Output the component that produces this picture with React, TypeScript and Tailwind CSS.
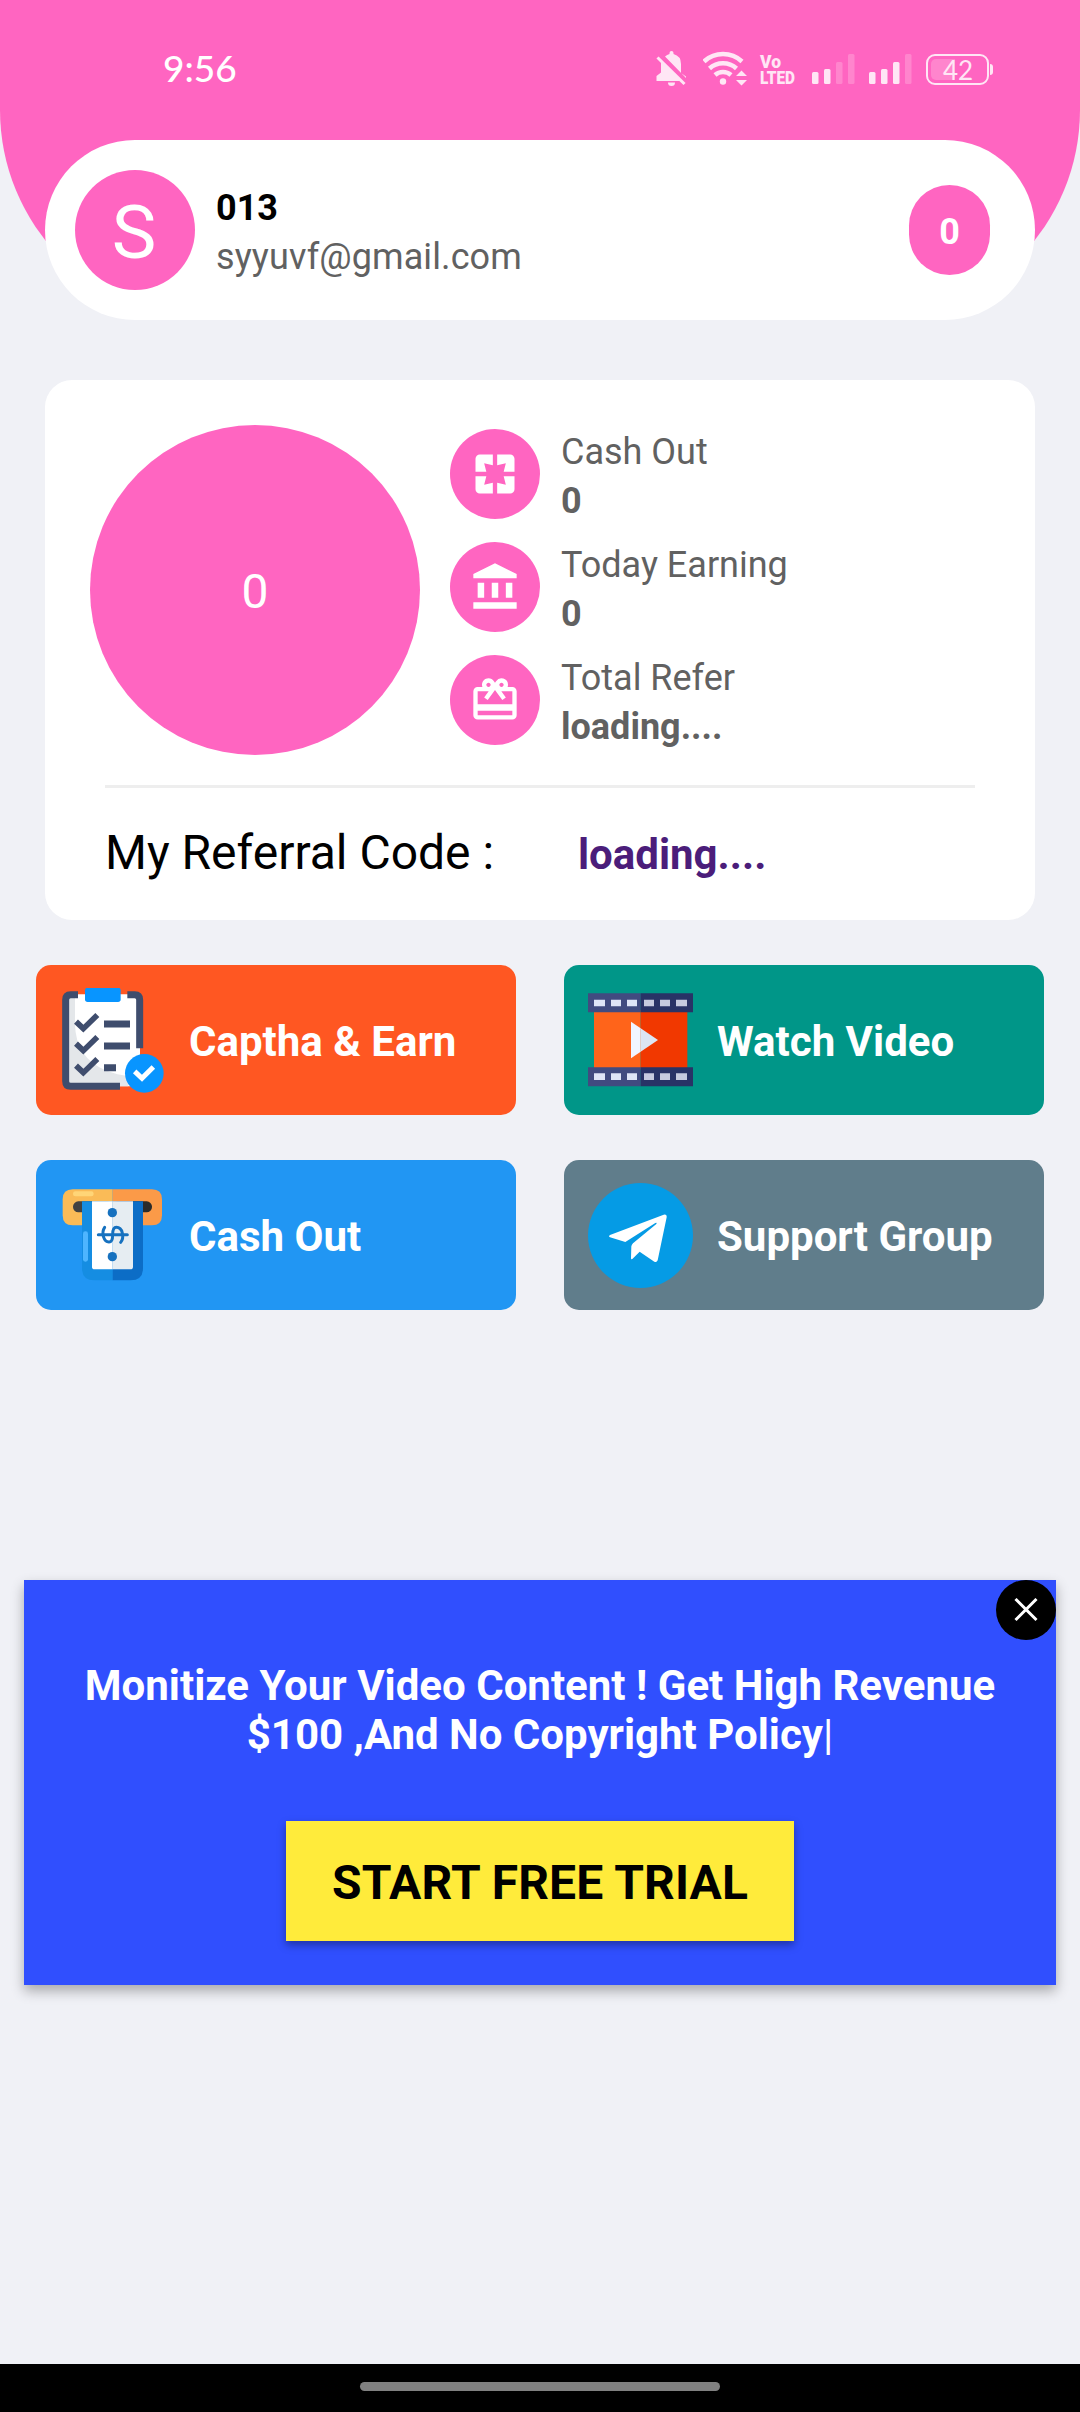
import type { ReactNode } from 'react';
import { MdAccountBalance, MdCardGiftcard, MdPages } from 'react-icons/md';

const stats = [
  { label: 'Cash Out', value: '0', icon: MdPages },
  { label: 'Today Earning', value: '0', icon: MdAccountBalance },
  { label: 'Total Refer', value: 'loading....', icon: MdCardGiftcard }
];

function StatusBar() {
  return (
    <div className="flex h-[140px] items-start justify-between pl-[163px] pr-[87px]">
      <span className="mt-[46px] font-[Lato,sans-serif] text-[37px] font-medium leading-[44px] text-white">9:56</span>
      <div className="mt-[46px] flex h-[48px] text-[#ffe6f5]">
        {/* Muted bell */}
        <svg className="mr-[15px] h-[48px] w-[32px]" viewBox="0 0 32 48" fill="currentColor">
          <path d="M9 10.500Q11 8.500 13.500 8V7a2 2 0 0 1 4 0v1q7.500 2 7.500 10v9l5 3.500v1.500z" />
          <path d="M5 14v12.500L.500 30v5h25z" />
          <path d="M12 36.500h7a3.500 3.500 0 0 1-7 0z" />
          <path d="M1.500 11.500L28.500 38" stroke="currentColor" strokeWidth="3" />
        </svg>
        {/* Wifi with traffic arrows */}
        <svg className="mr-[12px] h-[48px] w-[45px]" viewBox="0 0 45 48" fill="none" stroke="currentColor" strokeWidth="4.500">
          <path d="M1 15.500a28 28 0 0 1 38 0M6.500 22.500a20 20 0 0 1 27 0M12 29a12 12 0 0 1 16 0" />
          <circle cx="20" cy="35.500" r="3.200" fill="currentColor" stroke="none" />
          <path d="M33 30l5.500-5.500L44 30zM33 34l5.500 5.500L44 34z" fill="currentColor" stroke="none" />
        </svg>
        <svg className="mr-[14px] h-[48px] w-[38px] overflow-visible" viewBox="0 0 38 48" fill="currentColor">
          <text x="0" y="21.500" textLength="21" lengthAdjust="spacingAndGlyphs" className="font-[Roboto,sans-serif] text-[19px] font-black">Vo</text>
          <text x="0" y="37.500" textLength="35" lengthAdjust="spacingAndGlyphs" className="font-[Roboto,sans-serif] text-[19px] font-black">LTED</text>
        </svg>
        <SignalBars active={2} />
        <SignalBars active={3} />
        <div className="mt-[8px] flex h-[31px] items-center">
          <div className="flex h-[31px] w-[63px] items-center rounded-[9px] border-2 border-[#ffe6f5] p-[3px]">
            <div className="flex h-[21px] w-[24px] items-center rounded-l-[5px] bg-[#ff85cd] pl-[12px] font-[Lato,sans-serif] text-[26px] leading-none">42</div>
          </div>
          <div className="ml-px h-[11px] w-[3px] rounded-r bg-[#ffe6f5]" />
        </div>
      </div>
    </div>
  );
}

function SignalBars({ active }: { active: number }) {
  const bars = [
    { x: 0, h: 12 },
    { x: 12, h: 15 },
    { x: 24, h: 22 },
    { x: 36, h: 30 }
  ];

  return (
    <svg className="mr-[14px] h-[48px] w-[43px]" viewBox="0 0 43 48">
      {bars.map((bar, i) => (
        <rect key={bar.x} x={bar.x} y={38 - bar.h} width="6.500" height={bar.h} rx="1.500" fill={i < active ? '#ffe6f5' : '#ff85cd'} />
      ))}
    </svg>
  );
}

function ChecklistIcon() {
  return (
    <svg className="size-[105px]" viewBox="90 83 315 315">
      <path d="M106 102h224v276H106z" fill="#fff" />
      <path d="M116 112h19v80q2 100 90 137 40 16 70 18v31H116z" fill="#e4e7ea" />
      <path d="M144 103h-22q-15 0-15 15v245q0 15 15 15h148M292 103h22q15 0 15 15v146" fill="none" stroke="#3f4d6d" strokeWidth="21" />
      <rect x="165" y="82" width="107" height="43" rx="8" fill="#0895ff" />
      <path d="M138 184l22 21 42-41M138 250l22 21 42-41M138 316l22 21 42-41" fill="none" stroke="#3f4d6d" strokeWidth="17" />
      <path d="M222 191h78M222 257h78M222 322h36" stroke="#3f4d6d" strokeWidth="21" />
      <circle cx="343" cy="339" r="58" fill="#0895ff" />
      <path d="M314 333l22 21 34-34" fill="none" stroke="#fff" strokeWidth="15" />
    </svg>
  );
}

function FilmIcon() {
  return (
    <svg className="size-[105px]" viewBox="84 83 315 315">
      <path d="M102 150h140v175H102z" fill="#ff641a" />
      <path d="M242 150h140v175H242z" fill="#f13800" />
      <path d="M84 99h158v57H84zM84 321h158v57H84z" fill="#414b80" />
      <path d="M242 99h157v57H242zM242 321h157v57H242z" fill="#283366" />
      <path d="M102 118h33v20h-33zM153 118h30v20h-30zM201 118h30v20h-30zM102 339h33v20h-33zM153 339h30v20h-30zM201 339h30v20h-30z" fill="#dfe5f7" />
      <path d="M252 118h30v20h-30zM300 118h30v20h-30zM348 118h33v20h-33zM252 339h30v20h-30zM300 339h30v20h-30zM348 339h33v20h-33z" fill="#c6cbdf" />
      <path d="M213 184l29 20v70l-29 20z" fill="#f1f6ff" />
      <path d="M242 204l52 35-52 35z" fill="#dce5f3" />
    </svg>
  );
}

function CashIcon() {
  return (
    <svg className="size-[105px]" viewBox="90 83 315 315">
      <path d="M248 102H128q-30 0-30 30v48q0 30 30 30h120z" fill="#fabb57" />
      <path d="M248 102h118q30 0 30 30v48q0 30-30 30H248z" fill="#fb9a48" />
      <rect x="129" y="108" width="62" height="15" rx="7" fill="#ffd577" />
      <rect x="129" y="138" width="119" height="33" rx="16" fill="#424242" />
      <rect x="248" y="138" width="118" height="33" rx="16" fill="#2b2b2b" />
      <path d="M156 138h92v237h-55q-37 0-37-37z" fill="#158de2" />
      <path d="M248 138h91v200q0 37-37 37h-54z" fill="#0c6dc6" />
      <path d="M186 138h62v204h-54q-8 0-8-8z" fill="#fff" />
      <path d="M248 138h61v196q0 8-8 8h-53z" fill="#e6edf2" />
      <rect x="159" y="228" width="15" height="91" rx="7" fill="#4eb5ff" />
      <circle cx="247" cy="172" r="14" fill="#1671bf" />
      <circle cx="247" cy="304" r="14" fill="#1671bf" />
      {/* Dollar sign printed sideways on the note */}
      <path d="M205 238h87M224 216q-8 12-4 27 5 17 17 17 11 0 11-22t11-22q14 0 18 17 4 17-5 28" fill="none" stroke="#1671bf" strokeWidth="9" strokeLinecap="round" />
    </svg>
  );
}

function TelegramIcon() {
  return (
    <svg className="size-[105px]" viewBox="84 82 315 315">
      <circle cx="241.500" cy="239.500" r="157.500" fill="#059be5" />
      <path d="M150 238L311 177q10-2 9 8L293 314q-3 8-10 4l-44-30-22 22q-4 3-4-3l1-35q1-5 5-9l70-58q3-5-3-3l-90 57-46-14q-6-3 0-7z" fill="#fff" />
    </svg>
  );
}

function ActionButton({ label, color, children }: { label: string; color: string; children: ReactNode }) {
  return (
    <button className={`flex h-[150px] items-center gap-[24px] rounded-[15px] pl-[24px] text-[42px] font-bold leading-[49px] text-white ${color}`}>
      {children}
      <span className="mt-[2px] whitespace-nowrap">{label}</span>
    </button>
  );
}

export default function App() {
  return (
    <main className="flex h-[2412px] w-[1080px] flex-col overflow-hidden bg-[#f0f1f6] font-[Roboto,sans-serif]">
      <header className="h-[320px] rounded-b-[210px] bg-[#ff65c1]">
        <StatusBar />
        <div className="mx-[45px] flex h-[180px] items-center rounded-[90px] bg-white pl-[30px] pr-[45px]">
          <div className="flex size-[120px] items-center justify-center rounded-full bg-[#ff65c1] text-[75px] leading-none text-white">
            <span className="mr-[2px] mt-[5px]">S</span>
          </div>
          <div className="ml-[21px] mt-[6px] flex-1 text-[36px] leading-[49px]">
            <p className="font-bold text-black">013</p>
            <p className="tracking-[0.1px] text-[#616161]">syyuvf@gmail.com</p>
          </div>
          <div className="flex h-[90px] w-[81px] items-center justify-center rounded-full bg-[#ff65c1] pt-[3px] text-[36px] font-bold text-white">0</div>
        </div>
      </header>

      <section className="mx-[45px] mt-[60px] h-[540px] rounded-[27px] bg-white pt-[45px]">
        <div className="flex h-[330px] pl-[45px]">
          <div className="flex size-[330px] items-center justify-center rounded-full bg-[#ff65c1] pt-[3px] text-[48px] text-white">0</div>
          <div className="ml-[30px] mt-[3px] flex flex-col gap-[15px]">
            {stats.map(({ label, value, icon: Icon }) => (
              <div key={label} className="flex h-[98px] gap-[21px] text-[36px] leading-[49px] text-[#616161]">
                <div className="mt-px flex size-[90px] items-center justify-center rounded-full bg-[#ff65c1]">
                  <Icon className="size-[52px] text-white" />
                </div>
                <div>
                  <p>{label}</p>
                  <p className="font-bold">{value}</p>
                </div>
              </div>
            ))}
          </div>
        </div>
        <div className="mx-[60px] mt-[30px] h-[3px] bg-[#eeeeee]" />
        <div className="mt-[37px] flex items-baseline pl-[60px]">
          <p className="w-[473px] text-[48px] leading-[56px] text-black">My Referral Code :</p>
          <p className="text-[42px] font-bold leading-[49px] text-[#4b1d7a]">loading....</p>
        </div>
      </section>

      <div className="mx-[36px] mt-[45px] grid grid-cols-2 gap-x-[48px] gap-y-[45px]">
        <ActionButton label="Captha &amp; Earn" color="bg-[#ff5722]">
          <ChecklistIcon />
        </ActionButton>
        <ActionButton label="Watch Video" color="bg-[#009688]">
          <FilmIcon />
        </ActionButton>
        <ActionButton label="Cash Out" color="bg-[#2196f3]">
          <CashIcon />
        </ActionButton>
        <ActionButton label="Support Group" color="bg-[#607d8b]">
          <TelegramIcon />
        </ActionButton>
      </div>

      <section className="relative mx-[24px] mt-[270px] flex h-[405px] flex-col items-center bg-[#304ffe] pt-[81px] shadow-[0_6px_12px_rgba(0,0,0,0.3)]">
        <button className="absolute right-0 top-0 flex size-[60px] items-center justify-center rounded-full bg-black">
          <svg className="mr-px size-[24px]" viewBox="0 0 24 24" stroke="#fff" strokeWidth="3">
            <path d="M1.500 1l21 21M22.500 1l-21 21" />
          </svg>
        </button>
        <p className="text-center text-[42px] font-bold leading-[49px] text-white">
          Monitize Your Video Content ! Get High Revenue
          <br />
          $100 ,And No Copyright Policy<span className="font-normal">|</span>
        </p>
        <button className="mt-[62px] h-[120px] w-[508px] bg-[#ffeb3b] pt-[3px] text-[48px] font-bold leading-[56px] tracking-[0.15px] text-black shadow-[0_4px_8px_rgba(0,0,0,0.35)]">
          START FREE TRIAL
        </button>
      </section>

      <footer className="mt-auto flex h-[48px] justify-center bg-black pt-[18px]">
        <div className="h-[9px] w-[360px] rounded-full bg-[#808080]" />
      </footer>
    </main>
  );
}
